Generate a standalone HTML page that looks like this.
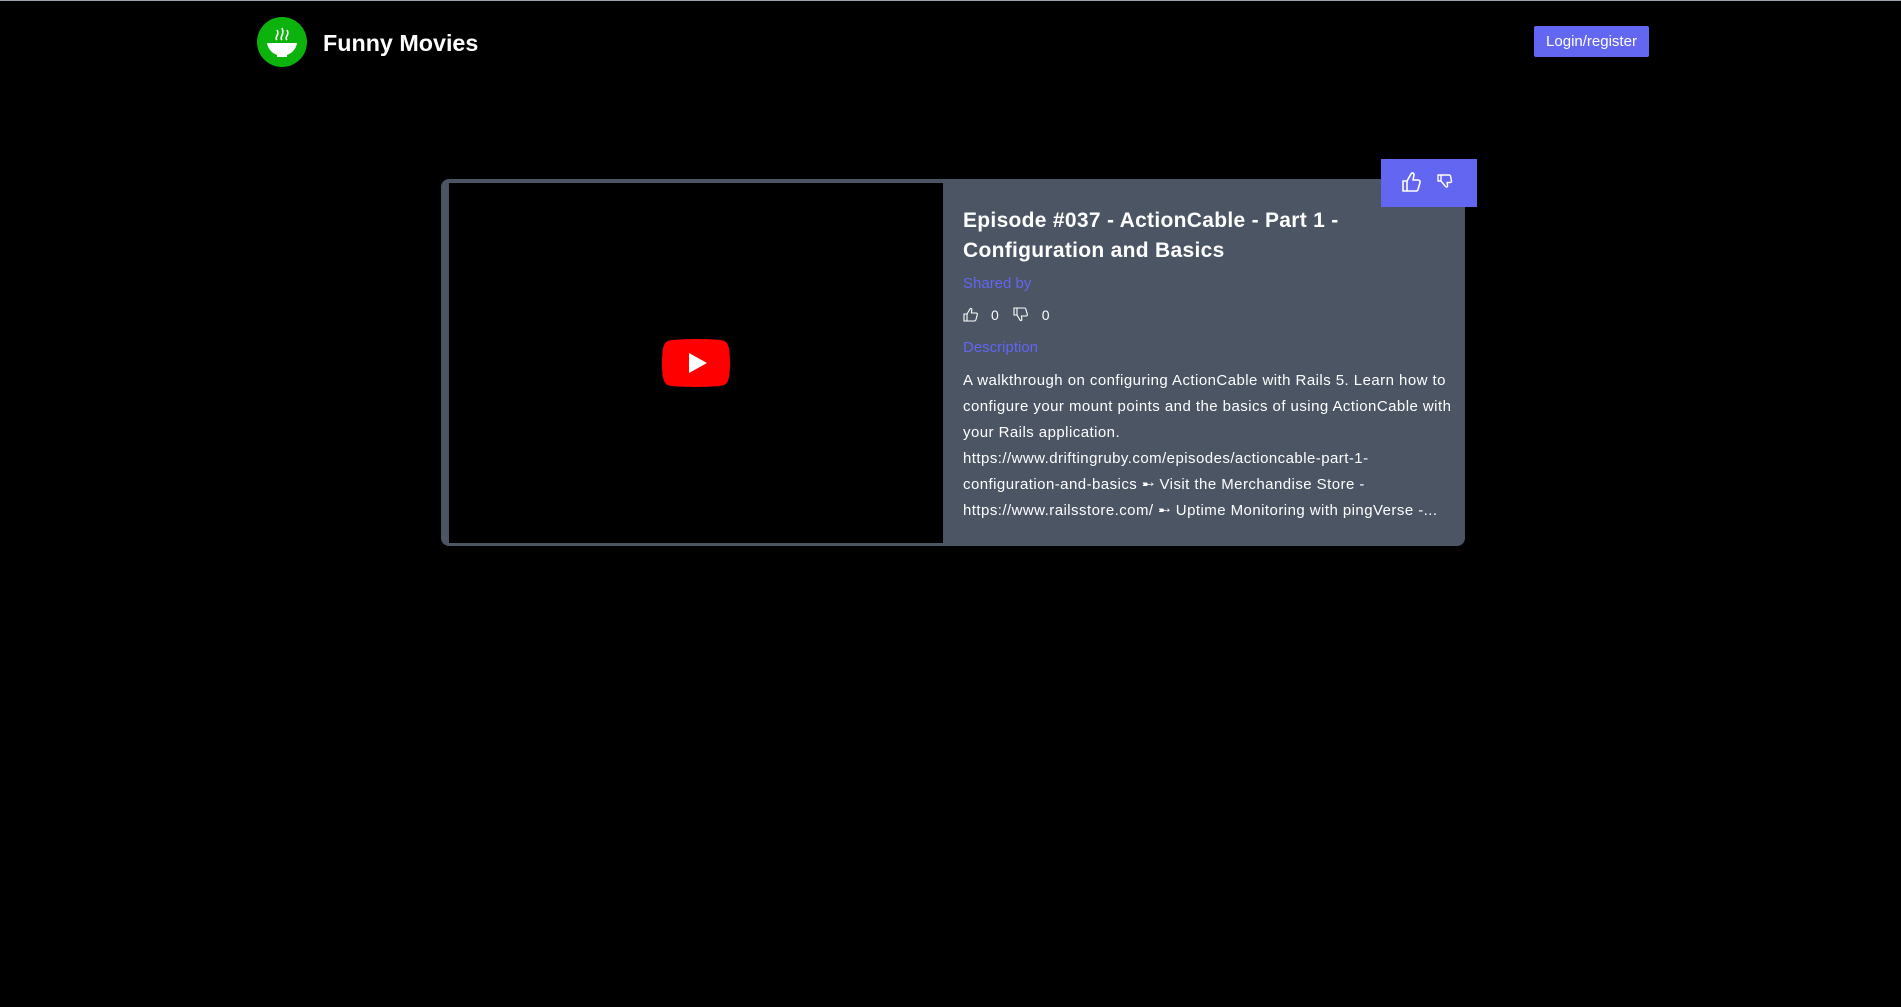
<!DOCTYPE html>
<html><head><meta charset="utf-8"><style>
*{margin:0;padding:0;box-sizing:border-box}
html,body{width:1901px;height:1007px;background:#000;overflow:hidden;font-family:"Liberation Sans",sans-serif;color:#fff}
.topline{position:absolute;left:0;top:0;width:1901px;height:1px;background:#9ca3af}
.logo{position:absolute;left:257px;top:17px;width:50px;height:50px;border-radius:50%;background:#0db30d}
.brand{position:absolute;left:323px;top:29px;font-size:23.3px;font-weight:bold;line-height:28px}
.btn{position:absolute;left:1534px;top:26px;width:115px;height:31px;background:#6366f1;border-radius:2px;font-size:15px;line-height:31px;text-align:center}
.card{position:absolute;left:441px;top:179px;width:1024px;height:367px;background:#4b5563;border-radius:8px}
.video{position:absolute;left:449px;top:183px;width:494px;height:360px;background:#000}
.yt{position:absolute;left:662px;top:339px;width:68px;height:48px}
.badge{position:absolute;left:1381px;top:159px;width:96px;height:48px;background:#6366f1}
.t{position:absolute;left:963px;white-space:nowrap}
.title{top:206px;font-size:21px;letter-spacing:0.3px;font-weight:bold;line-height:30px}
.lbl{color:#6366f1;font-size:15px}
.p{top:368px;font-size:15px;letter-spacing:0.45px;line-height:26px}
</style></head><body>
<div class="topline"></div>
<div class="logo"><svg width="50" height="50" viewBox="0 0 50 50">
<path d="M10 26 H40 A15 15 0 0 1 30 38 L30 40 H20 L20 38 A15 15 0 0 1 10 26Z" fill="#fff"/>
<path d="M20 23 C17 20 23 18 20 13 M25 23 C22 20 28 18 25 11 M30 23 C27 20 33 18 30 13" stroke="#fff" stroke-width="1.6" fill="none"/>
</svg></div>
<div class="brand">Funny Movies</div>
<div class="btn">Login/register</div>
<div class="card"></div>
<div class="video"></div>
<svg class="yt" viewBox="0 0 68 48"><path d="M66.5 7.7c-.8-2.9-2.5-5.4-5.4-6.2C55.8.1 34 0 34 0S12.2.1 6.9 1.6C4 2.4 2.3 4.8 1.5 7.7 0 13 0 24 0 24s0 11 1.5 16.3c.8 2.9 2.5 5.4 5.4 6.2C12.2 47.9 34 48 34 48s21.8-.1 27.1-1.6c2.9-.8 4.6-3.2 5.4-6.1C68 35 68 24 68 24s0-11-1.5-16.3z" fill="#f00"/><path d="M27 34V14l18 10z" fill="#fff"/></svg>
<div class="badge"><svg width="96" height="48" viewBox="0 0 96 48">
<path d="M22 22h4v10h-4z M26 22l4-7c1-2 3-1 3 1l-1 5h5c1.5 0 2.5 1.2 2 2.5l-2 7c-.3 1-1 1.5-2 1.5H26" stroke="#fff" stroke-width="1.6" fill="none" stroke-linejoin="round"/>
<path d="M57 16h3v6h-3z M60 16h8c.8 0 1.3.4 1.5 1l1 5c.2.8-.4 1.5-1.2 1.5H66l.6 3c.2 1.5-1.5 2-2.2.8L60 22" stroke="#fff" stroke-width="1.4" fill="none" stroke-linejoin="round"/>
</svg></div>
<div class="t title">Episode #037 - ActionCable - Part 1 -<br>Configuration and Basics</div>
<div class="t lbl" style="top:275px">Shared by</div>
<div class="t" style="top:307px;font-size:14px;line-height:16px">
<svg width="15" height="15" viewBox="0 0 15 15" style="vertical-align:-2px"><path d="M1 7h3v7H1z M4 7l3-5c.7-1 2-.6 1.8.6L8.4 6H13c1 0 1.6.8 1.3 1.7l-1.5 5.3c-.2.6-.7 1-1.3 1H4" stroke="#fff" stroke-width="1.1" fill="none"/></svg><span style="margin-left:13px">0</span>
<svg width="15" height="15" viewBox="0 0 15 15" style="vertical-align:-2px;margin-left:10px"><path d="M1 1h3v7H1z M4 8l3 5c.7 1 2 .6 1.8-.6L8.4 9H13c1 0 1.6-.8 1.3-1.7L12.8 2c-.2-.6-.7-1-1.3-1H4" stroke="#fff" stroke-width="1.1" fill="none"/></svg><span style="margin-left:14px">0</span>
</div>
<div class="t lbl" style="top:339px">Description</div>
<div class="t p">A walkthrough on configuring ActionCable with Rails 5. Learn how to<br>configure your mount points and the basics of using ActionCable with<br>your Rails application.<br>https://www.driftingruby.com/episodes/actioncable-part-1-<br>configuration-and-basics ➸ Visit the Merchandise Store -<br>https://www.railsstore.com/ ➸ Uptime Monitoring with pingVerse -...</div>
</body></html>
